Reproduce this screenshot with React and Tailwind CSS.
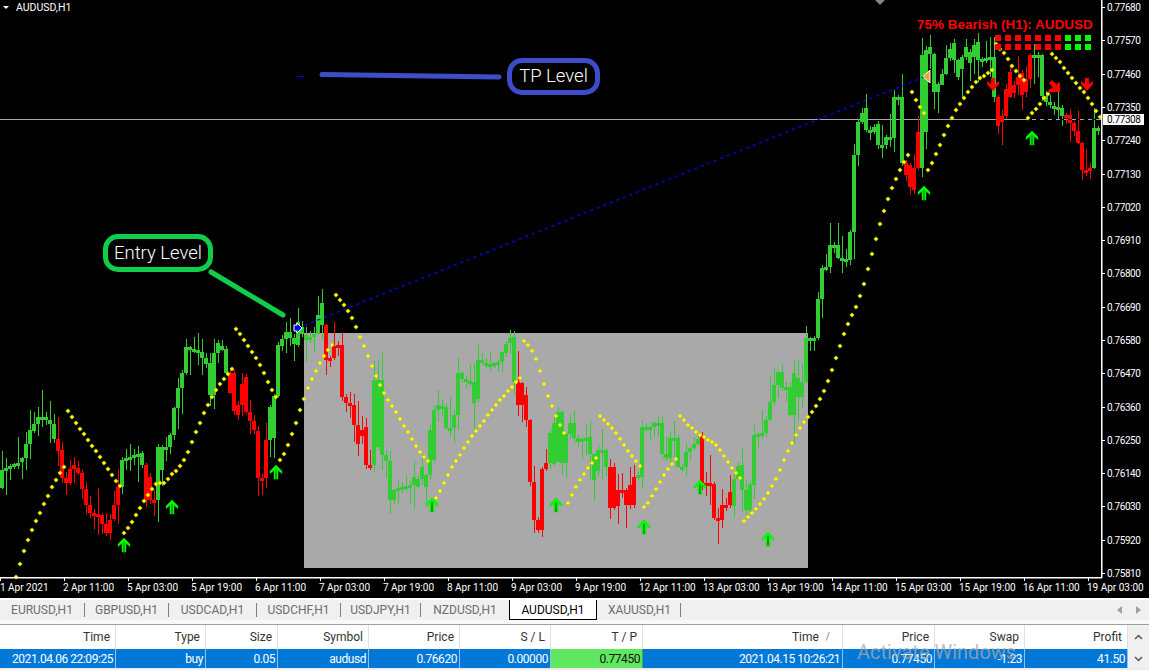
const SEGMENTS = [
  ['g', [[0,487],[3,470],[13,465],[23,462],[32,430],[40,417],[45,417],[55,427],[57,450]]],
  ['r', [[60,450],[63,477],[68,483],[73,465],[80,473],[85,493],[90,513],[100,515],[108,533],[115,510],[120,487]]],
  ['g', [[123,460],[143,453],[145,477]]],
  ['r', [[148,477],[148,500],[157,500],[157,473]]],
  ['g', [[160,470],[160,447],[170,447],[172,435],[176,408],[180,388],[184,373],[188,347],[200,352],[208,363],[212,395],[217,343],[227,352],[228,373]]],
  ['r', [[232,373],[232,393],[237,415],[242,398],[245,377],[248,412],[257,433],[260,478],[265,478],[268,440]]],
  ['g', [[272,438],[272,407],[277,393],[280,345],[288,332],[297,345],[297,322],[307,340],[317,333],[322,303],[323,325]]],
  ['r', [[327,325],[327,360],[333,358],[335,346],[343,345],[343,395],[348,403],[355,406],[357,443],[362,432],[367,427],[368,465],[373,465]]],
  ['g', [[376,447],[376,380],[380,380],[380,437],[385,460],[390,462],[392,500],[397,488],[403,487],[412,485],[413,477],[418,487],[423,467],[425,487],[432,460],[432,430],[437,405],[445,407],[448,428],[455,428],[456,415],[460,373],[465,380],[472,382],[473,403],[477,397],[480,360],[487,365],[500,362],[507,345],[513,337],[516,382]]],
  ['r', [[520,383],[520,405],[527,395],[528,420],[532,482],[537,530],[540,530],[542,473],[547,463]]],
  ['g', [[552,463],[552,433],[560,412],[560,462],[564,463],[567,437],[572,423],[577,442],[590,437],[595,480],[598,452],[600,450],[607,450],[608,467]]],
  ['r', [[612,467],[612,508],[618,505],[619,490],[625,490],[625,505],[632,505],[632,485],[637,475]]],
  ['g', [[640,477],[643,467],[643,427],[650,430],[655,423],[662,423],[663,453],[668,458],[672,438],[677,438],[678,467],[685,467],[688,452],[695,445],[698,442]]],
  ['r', [[703,435],[703,483],[710,483],[715,485],[716,518],[723,520],[723,505],[732,505],[732,492]]],
  ['g', [[735,490],[737,467],[742,465],[743,485],[748,510],[753,478],[755,435],[765,433],[768,420],[772,402],[775,388],[780,372],[783,388],[790,387],[792,415],[795,373],[800,397],[805,378],[808,338],[817,338],[818,325],[820,299],[824,268],[828,267],[832,245],[838,245],[840,258],[850,260],[852,232],[856,155],[860,122],[866,108],[868,130],[872,132],[878,124],[880,145],[887,145],[888,137],[895,138],[896,97],[902,97],[902,138],[904,163]]],
  ['r', [[908,165],[908,175],[913,190],[916,168],[920,168],[920,132]]],
  ['g', [[924,132],[924,55],[930,47],[933,58],[936,92],[943,78],[947,60],[955,43],[957,77],[962,63],[967,47],[970,63],[977,42],[978,60],[993,57],[993,95],[997,97]]],
  ['r', [[998,110],[998,125],[1005,115],[1010,72],[1010,97],[1022,73],[1023,95],[1030,73]]],
  ['g', [[1032,55],[1042,55],[1043,95],[1050,105],[1062,108],[1063,115]]],
  ['r', [[1068,115],[1077,133],[1080,143],[1083,170],[1091,170]]],
  ['g', [[1095,160],[1095,128],[1100,128]]],
]

// each run: first x, then one y per 4px step
const DOTS = [
  [16, [577,564,551,540,530,521,513,504,496,487,480,473,467]],
  [68, [411,417,423,429,434,440,446,451,457,463,469,475,481,486]],
  [124, [533,528,522,515,508,501,495,489,484,483,483,479,474,471,466,460,452,442,432,423,413,405,397,390,384,379,374,369]],
  [236, [329,334,340,346,352,358,365,373,382,390,397]],
  [280, [460,454,445,434,423,410,399,388,379,371,363,356,350,345]],
  [336, [295,300,305,311,318,327,337,346,356,366,376,385,393,400,406,412,419,426,432,439,446,452,457,461]],
  [432, [503,498,491,483,475,467,461,455,448,442,436,431,426,421,415,410,405,400,396,391,387,382,378]],
  [524, [341,345,351,359,371,384,396,406,416,425,433]],
  [568, [503,495,487,480,474,468,463,458]],
  [600, [416,420,424,428,433,439,445,451,456,461,466]],
  [644, [507,503,496,489,482,475,469,464,459]],
  [680, [416,420,425,428,432,435,437,440,442,445,450,456,462,468,473,478]],
  [744, [521,517,513,509,504,499,493,486,479,470,460,451,443,435,428,422,417,412,406,399,391,381,370,358,346,334,324,315,307,296,284,269,254,239,224,211,199,188,179,170,162,155]],
  [912, [92,100,107,113]],
  [928, [170,163,154,145,135,126,118,110,104,98,92,87,82,78,76,73,70]],
  [996, [44,49,53,59,66,71,76,80]],
  [1028, [118,113,109,104,98,94]],
  [1052, [54,58,62,68,73,78,83,88,92,98,104,111,117]],
]

const UP_ARROWS = [[124,545],[172,507],[276,472],[432,505],[556,505],[644,527],[700,487],[768,539],[924,193],[1032,138]]
const PRICES = ['0.77680','0.77570','0.77460','0.77350','0.77240','0.77130','0.77020','0.76910','0.76800','0.76690','0.76580','0.76470','0.76360','0.76250','0.76140','0.76030','0.75920','0.75810']
const DATES = ['1 Apr 2021','2 Apr 11:00','5 Apr 03:00','5 Apr 19:00','6 Apr 11:00','7 Apr 03:00','7 Apr 19:00','8 Apr 11:00','9 Apr 03:00','9 Apr 19:00','12 Apr 11:00','13 Apr 03:00','13 Apr 19:00','14 Apr 11:00','15 Apr 03:00','15 Apr 19:00','16 Apr 11:00','19 Apr 03:00']
const TABS = ['EURUSD,H1','GBPUSD,H1','USDCAD,H1','USDCHF,H1','USDJPY,H1','NZDUSD,H1','AUDUSD,H1','XAUUSD,H1']
const SIGNALS = ['r','r','r','r','r','r','r','g','g','g']

const HEAD = ['Time','Type','Size','Symbol','Price','S / L','T / P','Time','Price','Swap','Profit']
const ROW = ['2021.04.06 22:09:25','buy','0.05','audusd','0.76620','0.00000','0.77450','2021.04.15 10:26:21','0.77450','-1.23','41.50']

function noise(i) {
  const v = Math.sin(i * 127.1 + 11.7) * 43758.5453
  return v - Math.floor(v)
}

function buildBars() {
  const pts = SEGMENTS.flatMap(([color, list]) => list.map(([x, y]) => ({ x, y, color })))
  const bars = []
  for (let x = 0; x < 1100; x += 4) {
    let top = Infinity
    let bottom = -Infinity
    let color = null
    for (let k = 1; k < pts.length; k++) {
      const a = pts[k - 1]
      const b = pts[k]
      if (b.x < x || a.x > x + 4) continue
      const at = (px) => (b.x === a.x ? a.y : a.y + ((b.y - a.y) * (px - a.x)) / (b.x - a.x))
      const y1 = b.x === a.x ? a.y : at(Math.max(a.x, x))
      const y2 = b.x === a.x ? b.y : at(Math.min(b.x, x + 4))
      top = Math.min(top, y1, y2)
      bottom = Math.max(bottom, y1, y2)
      if (a.x <= x + 2 && b.x >= x + 2 && !color) color = b.color
    }
    if (top === Infinity) continue
    if (bottom - top < 3) bottom = top + 3
    const i = x / 4
    const up = noise(i) * noise(i + 300) * 30 + 1
    const down = noise(i + 600) * noise(i + 900) * 30 + 1
    bars.push({ x, top, bottom, up, down, color: color === 'r' ? '#ff0000' : '#32cd32' })
  }
  return bars
}

const BARS = buildBars()

function Chart() {
  return (
    <svg width="1149" height="598" className="block" style={{ fontFamily: 'Roboto, sans-serif' }}>
      <rect x="304" y="333" width="504" height="235" fill="#a9a9a9" />
      <rect x="0" y="119" width="1101" height="1" fill="#a8a8a8" />
      {BARS.map((b) => (
        <g key={b.x} fill={b.color}>
          <rect x={b.x + 2} y={Math.round(b.top - b.up)} width="1" height={Math.round(b.bottom - b.top + b.up + b.down)} />
          <rect x={b.x} y={Math.round(b.top)} width="4" height={Math.round(b.bottom - b.top)} />
        </g>
      ))}
      <line x1="1028" y1="119.5" x2="1100" y2="119.5" stroke="#000" strokeDasharray="4 4" />
      <line x1="298" y1="328" x2="924" y2="77" stroke="#0000ff" strokeWidth="1.300" strokeDasharray="3 4" />
      <rect x="297" y="76" width="7" height="1" fill="#0000ff" />

      {/* entry and close markers */}
      <path d="M294 325h3v-2l5 5-5 5v-2h-3z" fill="#0000ff" stroke="#fff" />
      <path d="M930 70v13l-7-6.500z" fill="#f0a030" stroke="#fff" />
      <path d="M875 0h10l-5 5z" fill="#778899" />

      {DOTS.map(([start, ys]) =>
        ys.map((y, i) => (
          <path key={`${start}-${i}`} d={`M${start + i * 4} ${y - 2.300}l2.300 2.300-2.300 2.300-2.300-2.300z`} fill="#ffff00" stroke="#b8b800" strokeWidth="0.4" />
        ))
      )}

      {UP_ARROWS.map(([x, y]) => (
        <g key={x}>
          <path d={`M${x} ${y - 7}l6 6v2.500l-4-3v8.500h-4v-8.500l-4 3v-2.500z`} fill="#00ff00" stroke="#00e000" strokeWidth="0.5" />
          <path d={`M${x - 1} ${y - 3}h2v10h-2z`} fill="#00a800" />
        </g>
      ))}

      <path d="M991 78h4v6l4-3v3l-6 7-6-7v-3l4 3z" fill="#ff0000" />
      <path d="M1085 78h4v6l4-3v3l-6 7-6-7v-3l4 3z" fill="#ff0000" />
      <path d="M1049 83l3-3 5 5 1-3 2 1v9h-11l-1-2 5-2z" fill="#ff0000" />

      <path d="M3 6h6l-3 3z" fill="#fff" />
      <text x="16" y="11" fontSize="10.500" fill="#fff">AUDUSD,H1</text>

      <line x1="322" y1="74.500" x2="499" y2="77" stroke="#3e4cc9" strokeWidth="5" strokeLinecap="round" />
      <line x1="211" y1="272" x2="283" y2="315" stroke="#0fce4a" strokeWidth="5" strokeLinecap="round" />

      {SIGNALS.flatMap((c, i) =>
        [35, 44].map((y) => (
          <rect key={`${i}-${y}`} x={995 + i * 10} y={y} width="6" height="6" fill={c === 'r' ? '#ff0000' : '#00ff00'} />
        ))
      )}

      {/* axes */}
      <rect x="1101" y="0" width="1.500" height="578" fill="#fff" />
      <rect x="0" y="577" width="1102" height="1.500" fill="#fff" />
      {PRICES.map((p, i) => {
        const y = Math.round(7 + i * 33.3)
        return (
          <g key={p}>
            <rect x="1101" y={y} width="4" height="1" fill="#fff" />
            <text x="1107" y={y + 4} fontSize="10" letterSpacing="-0.4" fill="#fff">{p}</text>
          </g>
        )
      })}
      <rect x="1103" y="114" width="41" height="11" fill="#fff" />
      <text x="1107" y="123" fontSize="10" letterSpacing="-0.4" fill="#000">0.77308</text>
      {DATES.map((d, i) => (
        <g key={d}>
          <rect x={i * 64} y="577" width="1" height="4" fill="#fff" />
          <text x={i === 0 ? 0 : i * 64 - 1} y="591" fontSize="10" fill="#fff">{d}</text>
        </g>
      ))}
    </svg>
  )
}

function Callout({ className, children }) {
  return (
    <div className={`absolute flex items-center justify-center rounded-[15px] border-[5px] bg-black text-[18.5px] font-light leading-none text-white ${className}`}>
      {children}
    </div>
  )
}

export default function App() {
  return (
    <div className="relative flex h-[670px] w-[1149px] flex-col overflow-hidden bg-white font-['Roboto',sans-serif]">
      <div className="relative h-[598px] bg-black">
        <Chart />
        <Callout className="left-[507px] top-[58px] h-[37px] w-[93px] border-[#3e4cc9]">TP Level</Callout>
        <Callout className="left-[103px] top-[234px] h-[38px] w-[110px] border-[#0fce4a]">Entry Level</Callout>
        <div className="absolute left-[917px] top-[17px] font-['Liberation_Sans',sans-serif] text-[13.500px] font-bold leading-[15px] text-[#ff0000]">
          75% Bearish (H1): AUDUSD
        </div>
      </div>

      <div className="flex h-[22px] items-stretch border-t-2 border-white bg-[#f0f0f0] text-xs text-[#6d6d6d]">
        <div className="flex w-[509px] items-center">
          {TABS.slice(0, 6).map((t, i) => (
            <span key={t} className={`flex items-center justify-center border-r border-[#808080] leading-[14px] ${['w-[85px]', 'w-[84px]', 'w-[88px]', 'w-[84px]', 'w-[80px]', 'w-[88px] border-r-0'][i]}`}>
              {t}
            </span>
          ))}
        </div>
        <div className="flex w-[88px] items-center justify-center border-x border-b border-black bg-white text-black">AUDUSD,H1</div>
        <div className="flex w-[84px] items-center justify-center">
          <span className="w-full border-r border-[#808080] pl-[2px] text-center leading-[14px]">XAUUSD,H1</span>
        </div>
        <div className="ml-auto mr-[8px] flex items-center gap-[14px]">
          <svg width="5" height="8"><path d="M5 0v8l-5-4z" fill="#a0a0a0" /></svg>
          <svg width="5" height="8"><path d="M0 0v8l5-4z" fill="#a0a0a0" /></svg>
        </div>
      </div>
      <div className="h-[4px] bg-[#f8f8f8]" />
      <div className="h-px bg-[#a0a0a0]" />

      <div className="grid grid-cols-[116px_90px_72px_91px_91px_91px_92px_200px_92px_90px_103px_21px] text-xs">
        {HEAD.map((h, i) => (
          <div key={i} className="flex h-[24px] items-center justify-end border-r border-[#e0e0e0] pr-[5px] text-[#333]">
            {h}
            {i === 7 && <span className="ml-[7px] mr-[7px] text-[10px] text-[#777]">/</span>}
          </div>
        ))}
        <div className="flex h-[24px] items-center justify-center bg-[#f0f0f0]">
          <svg width="9" height="6"><path d="M1 5l3.500-3.500 3.500 3.500" fill="none" stroke="#555" strokeWidth="1.500" /></svg>
        </div>
        {ROW.map((c, i) => (
          <div key={i} className={`flex h-[19px] items-center justify-end whitespace-nowrap border-r pr-[2px] tracking-[-0.45px] ${i === 6 ? 'border-[#3cb043] bg-[#5fe85f] text-[#111]' : 'border-[#8fc1ea] bg-[#0078d7] text-white'}`}>
            {c}
          </div>
        ))}
        <div className="flex h-[19px] items-center justify-center bg-[#f0f0f0]">
          <svg width="9" height="6"><path d="M1 1l3.500 3.500 3.500-3.500" fill="none" stroke="#555" strokeWidth="1.500" /></svg>
        </div>
      </div>
      <div className="h-[2px] bg-[#ececec]" />

      <div className="absolute left-[857px] top-[640px] whitespace-nowrap text-[20px] leading-[24px] text-[#aaaaaa]/75">Activate Windows</div>
    </div>
  )
}
